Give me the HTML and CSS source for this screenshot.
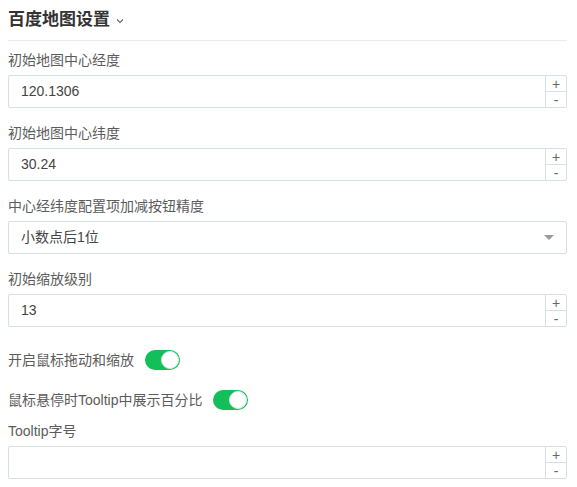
FILE: index.html
```html
<!DOCTYPE html>
<html lang="zh">
<head>
<meta charset="utf-8">
<link rel="stylesheet" href="styles.css">
</head>
<body>
<div class="panel">
  <div class="header">
    <span class="title">百度地图设置</span>
    <svg class="chev" width="8" height="6" viewBox="0 0 8 6"><path d="M1 1.5 L4 4.5 L7 1.5" fill="none" stroke="#666" stroke-width="1.1"/></svg>
  </div>

  <div class="field first">
    <div class="label">初始地图中心经度</div>
    <div class="num">
      <div class="value">120.1306</div>
      <div class="stepper"><span class="btn">+</span><span class="btn">-</span></div>
    </div>
  </div>

  <div class="field">
    <div class="label">初始地图中心纬度</div>
    <div class="num">
      <div class="value">30.24</div>
      <div class="stepper"><span class="btn">+</span><span class="btn">-</span></div>
    </div>
  </div>

  <div class="field">
    <div class="label">中心经纬度配置项加减按钮精度</div>
    <div class="select">
      <div class="value">小数点后1位</div>
      <span class="caret"></span>
    </div>
  </div>

  <div class="field">
    <div class="label">初始缩放级别</div>
    <div class="num">
      <div class="value">13</div>
      <div class="stepper"><span class="btn">+</span><span class="btn">-</span></div>
    </div>
  </div>

  <div class="switch-row first-switch">
    <span class="label-inline">开启鼠标拖动和缩放</span>
    <span class="switch"><span class="knob"></span></span>
  </div>

  <div class="switch-row">
    <span class="label-inline">鼠标悬停时Tooltip中展示百分比</span>
    <span class="switch"><span class="knob"></span></span>
  </div>

  <div class="field after-switch">
    <div class="label">Tooltip字号</div>
    <div class="num">
      <div class="value"></div>
      <div class="stepper"><span class="btn">+</span><span class="btn">-</span></div>
    </div>
  </div>
</div>
</body>
</html>
```

FILE: styles.css
```css
html, body {
  margin: 0;
  padding: 0;
  background: #fff;
}
body {
  font-family: "Liberation Sans", "Noto Sans CJK SC", sans-serif;
  color: #333;
}
.panel {
  padding: 0 10px 0 8px;
}
.header {
  border-bottom: 1px solid #e9eced;
  display: flex;
  align-items: center;
  gap: 6px;
  box-sizing: border-box;
  height: 41px;
}
.title {
  font-size: 17px;
  font-weight: bold;
  color: #333;
  line-height: 20px;
}
.chev {
  margin-top: 2px;
}
.field {
  margin-top: 15px;
}
.field.first {
  margin-top: 9px;
}
.label {
  font-size: 14px;
  line-height: 20px;
  height: 20px;
  color: #5c5c5c;
  margin-bottom: 5px;
}
.num, .select {
  height: 33px;
  box-sizing: border-box;
  border: 1px solid #d6dfe2;
  border-radius: 2px;
  display: flex;
  align-items: stretch;
  background: #fff;
}
.value {
  flex: 1;
  padding-left: 12px;
  font-size: 14px;
  line-height: 31px;
  color: #444;
}
.stepper {
  width: 20px;
  border-left: 1px solid #d6dfe2;
  display: flex;
  flex-direction: column;
}
.btn {
  flex: 1;
  display: flex;
  align-items: center;
  justify-content: center;
  font-size: 14px;
  color: #666;
  line-height: 1;
}
.btn + .btn {
  border-top: 1px solid #d6dfe2;
}
.select {
  align-items: center;
}
.caret {
  width: 0;
  height: 0;
  border-left: 5px solid transparent;
  border-right: 5px solid transparent;
  border-top: 5px solid #999;
  margin-right: 12px;
}
.switch-row {
  display: flex;
  align-items: center;
  gap: 11px;
  height: 20px;
  margin-top: 20px;
}
.switch-row.first-switch {
  margin-top: 23px;
}
.label-inline {
  font-size: 14px;
  color: #5c5c5c;
  line-height: 20px;
}
.switch {
  width: 35px;
  height: 20px;
  border-radius: 10px;
  background: #12bf58;
  position: relative;
  box-sizing: border-box;
}
.knob {
  position: absolute;
  right: 1px;
  top: 1px;
  width: 18px;
  height: 18px;
  border-radius: 50%;
  background: #fff;
  box-sizing: border-box;
  border: 1px solid #e8e8e8;
}
.field.after-switch {
  margin-top: 11px;
}
```
